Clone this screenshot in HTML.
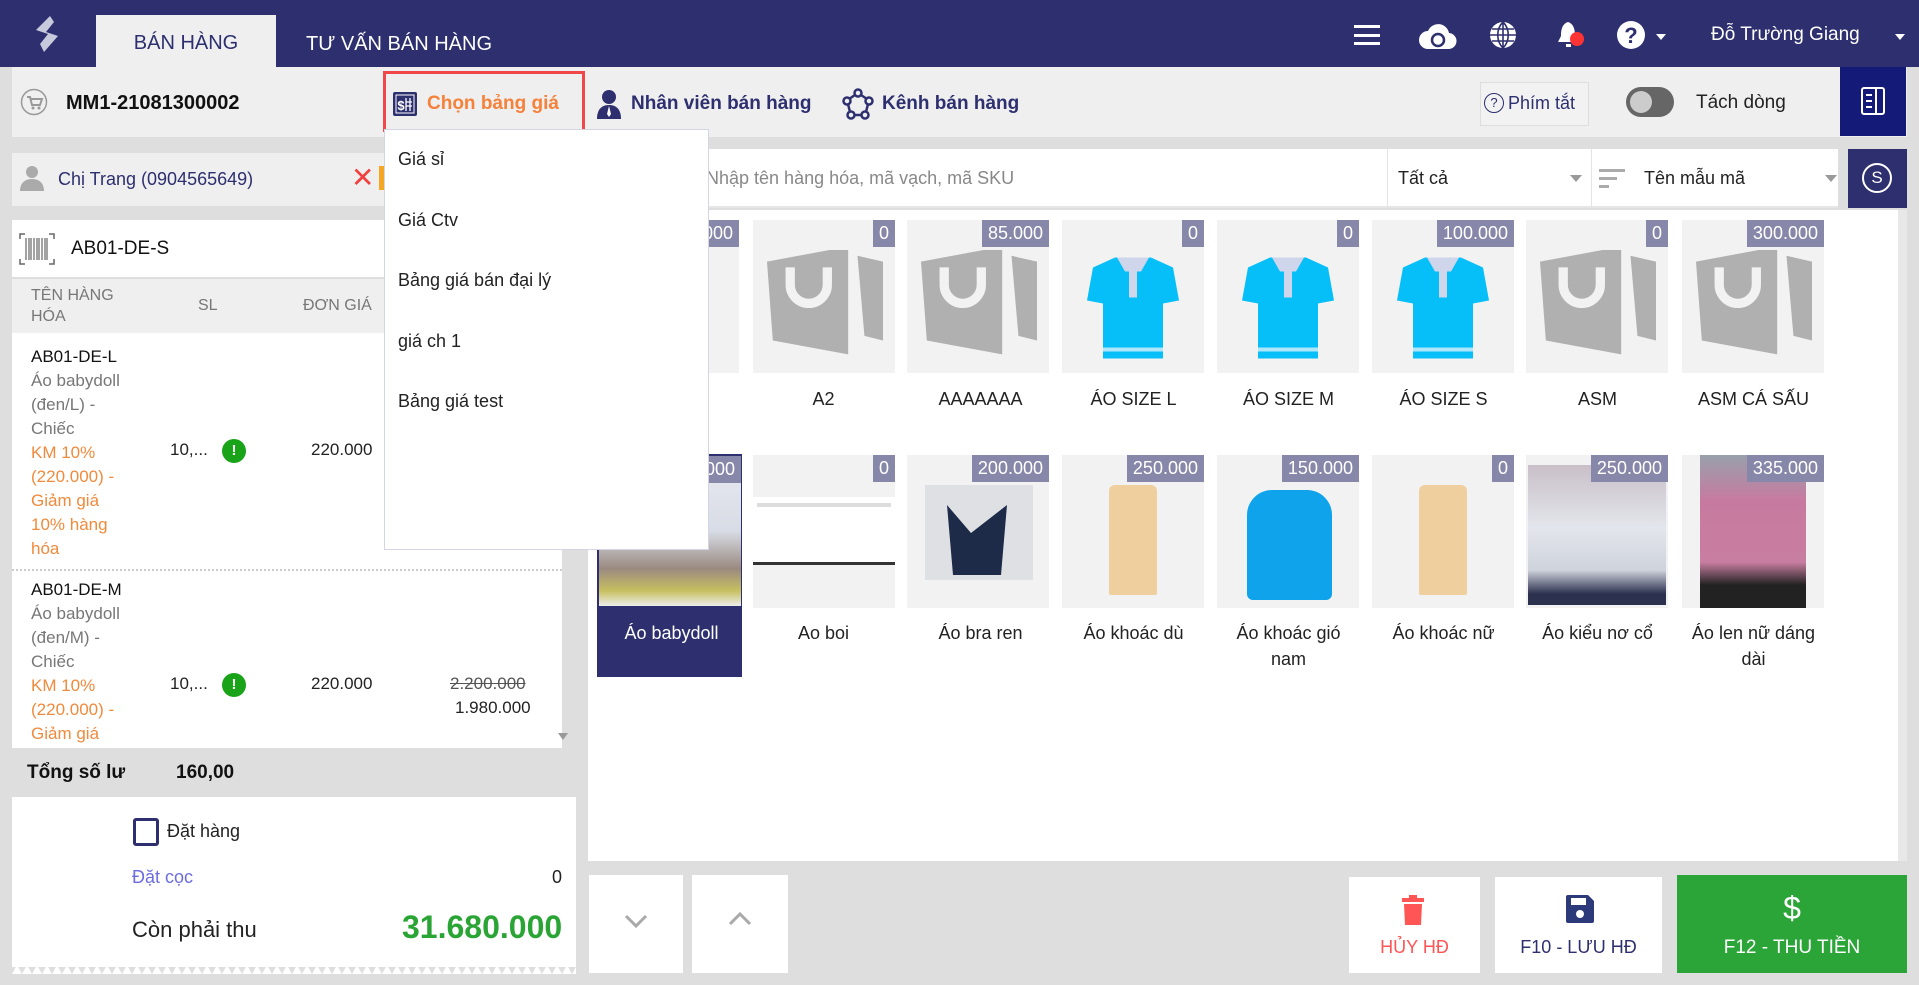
<!DOCTYPE html>
<html><head><meta charset="utf-8">
<style>
*{box-sizing:border-box;margin:0;padding:0}
body{width:1919px;height:985px;overflow:hidden;background:#dedede;font-family:"Liberation Sans","Noto Sans CJK SC",sans-serif;font-size:18px;color:#222;position:relative}
.a{position:absolute}
.top{left:0;top:0;width:1919px;height:67px;background:#2d2f6f}
.card{position:absolute;width:142px;height:153px;background:#f2f2f2}
.badge{position:absolute;right:0;top:0;height:27px;line-height:27px;padding:0 6px;background:#8787aa;color:#fff;font-size:18px}
.nm{position:absolute;width:155px;text-align:center;font-size:18px;color:#222;line-height:26px}
.ln{position:absolute;left:31px;font-size:17px;line-height:24px}
.g{color:#777}.o{color:#f08a3c}
.bag{position:absolute;left:14px;top:30px}
</style></head><body>
<!-- top bar -->
<div class="a top"></div>
<svg class="a" style="left:30px;top:14px" width="34" height="40" viewBox="0 0 34 40"><path d="M20 2 L6 16 L18 20 L10 30 L14 38 L28 22 L16 18 L24 8 Z" fill="#c7c9dc"/></svg>
<div class="a" style="left:96px;top:15px;width:180px;height:52px;background:#efefef;color:#2d2f6f;font-size:20px;text-align:center;line-height:56px">BÁN HÀNG</div>
<div class="a" style="left:306px;top:17px;color:#fff;font-size:20px;line-height:54px">TƯ VẤN BÁN HÀNG</div>
<div class="a" style="left:1354px;top:25px;width:26px;height:20px;border-top:3px solid #fff;border-bottom:3px solid #fff"><div style="margin-top:6px;height:3px;background:#fff"></div></div>
<svg class="a" style="left:1418px;top:21px" width="40" height="30" viewBox="0 0 40 30"><path d="M10 28 a9 9 0 0 1 0-18 a11 11 0 0 1 21 2 a8 8 0 0 1-1 16z" fill="#fff"/><circle cx="20" cy="19" r="6" fill="none" stroke="#2d2f6f" stroke-width="2.5"/></svg>
<svg class="a" style="left:1488px;top:20px" width="30" height="30" viewBox="0 0 30 30"><circle cx="15" cy="15" r="13" fill="#fff"/><path d="M15 2v26M2 15h26M4 9h22M4 21h22M15 2c-7 7-7 19 0 26M15 2c7 7 7 19 0 26" stroke="#2d2f6f" stroke-width="1.6" fill="none"/></svg>
<svg class="a" style="left:1555px;top:18px" width="32" height="34" viewBox="0 0 32 34"><path d="M13 4c-6 2-7 8-7 14l-3 6h20l-3-6c0-6-1-12-7-14z" fill="#fff"/><rect x="11" y="26" width="5" height="3" fill="#fff"/><circle cx="22" cy="21" r="7" fill="#f33"/></svg>
<svg class="a" style="left:1616px;top:20px" width="30" height="30" viewBox="0 0 30 30"><circle cx="15" cy="15" r="14" fill="#fff"/><text x="15" y="23" text-anchor="middle" font-family="Liberation Sans" font-weight="bold" font-size="22" fill="#2d2f6f">?</text></svg>
<div class="a" style="left:1656px;top:34px;border-left:5px solid transparent;border-right:5px solid transparent;border-top:6px solid #fff"></div>
<div class="a" style="left:1711px;top:24px;color:#fff;font-size:19px">Đỗ Trường Giang</div>
<div class="a" style="left:1895px;top:34px;border-left:5px solid transparent;border-right:5px solid transparent;border-top:6px solid #fff"></div>

<!-- toolbar -->
<div class="a" style="left:12px;top:67px;width:1895px;height:70px;background:#efefef"></div>
<svg class="a" style="left:20px;top:88px" width="28" height="28" viewBox="0 0 28 28"><circle cx="14" cy="14" r="12.5" fill="none" stroke="#999" stroke-width="1.5"/><path d="M7 9h3l2 8h8l2-6H11" fill="none" stroke="#999" stroke-width="2"/><circle cx="13" cy="20" r="1.5" fill="#999"/><circle cx="19" cy="20" r="1.5" fill="#999"/></svg>
<div class="a" style="left:66px;top:92px;font-size:20px;font-weight:bold;color:#111">MM1-21081300002</div>
<div class="a" style="left:383px;top:71px;width:202px;height:61px;border:3px solid #f0474a"></div>
<svg class="a" style="left:392px;top:91px" width="26" height="26" viewBox="0 0 26 26"><rect x="1" y="1" width="24" height="24" rx="2" fill="#2d2f6f"/><rect x="4" y="4" width="18" height="18" fill="none" stroke="#fff" stroke-width="1"/><text x="9" y="19" font-size="13" font-family="Liberation Sans" fill="#fff" text-anchor="middle" font-weight="bold">$</text><path d="M14 7v13M18 7v13M14 11h6M14 15h6" stroke="#fff" stroke-width="1.3"/></svg>
<div class="a" style="left:427px;top:93px;color:#f5813a;font-size:19px;font-weight:bold">Chọn bảng giá</div>
<svg class="a" style="left:596px;top:88px" width="26" height="32" viewBox="0 0 26 32"><circle cx="13" cy="9" r="7" fill="#2d2f6f"/><path d="M1 31c0-10 5-14 12-14s12 4 12 14z" fill="#2d2f6f"/><path d="M13 18l-2 8 2 3 2-3z" fill="#fff"/></svg>
<div class="a" style="left:631px;top:93px;color:#2d2f6f;font-size:19px;font-weight:bold">Nhân viên bán hàng</div>
<svg class="a" style="left:842px;top:88px" width="32" height="32" viewBox="0 0 32 32" fill="none" stroke="#2d2f6f" stroke-width="2.5"><circle cx="16" cy="5" r="3.5"/><circle cx="5" cy="13" r="3.5"/><circle cx="27" cy="13" r="3.5"/><circle cx="9" cy="27" r="3.5"/><circle cx="23" cy="27" r="3.5"/><path d="M13 7l-6 4M19 7l6 4M6 16l2 8M26 16l-2 8M12 27h8"/></svg>
<div class="a" style="left:882px;top:93px;color:#2d2f6f;font-size:19px;font-weight:bold">Kênh bán hàng</div>
<div class="a" style="left:1480px;top:82px;width:109px;height:44px;border:1px solid #ddd;background:#f2f2f2"></div>
<div class="a" style="left:1484px;top:93px;width:20px;height:20px;border:1.5px solid #2d2f6f;border-radius:50%;font-size:13px;text-align:center;line-height:18px;color:#2d2f6f">?</div>
<div class="a" style="left:1508px;top:93px;color:#2d2f6f;font-size:18px">Phím tắt</div>
<div class="a" style="left:1626px;top:87px;width:48px;height:30px;border-radius:15px;background:#666"><div style="position:absolute;left:4px;top:4px;width:22px;height:22px;border-radius:50%;background:#ccc"></div></div>
<div class="a" style="left:1696px;top:92px;font-size:19px;color:#222">Tách dòng</div>
<div class="a" style="left:1840px;top:67px;width:66px;height:69px;background:#131a77"></div>
<svg class="a" style="left:1860px;top:86px" width="26" height="30" viewBox="0 0 26 30" fill="none" stroke="#fff" stroke-width="2"><rect x="2" y="2" width="22" height="26" rx="2"/><path d="M16 2v26M6 9h6M6 15h6M6 21h6"/></svg>

<!-- left panel -->
<div class="a" style="left:12px;top:153px;width:564px;height:53px;background:#efefef"></div>
<svg class="a" style="left:19px;top:164px" width="26" height="28" viewBox="0 0 26 28"><circle cx="13" cy="8" r="6" fill="#aaa"/><path d="M1 27c0-8 5-12 12-12s12 4 12 12z" fill="#aaa"/></svg>
<div class="a" style="left:58px;top:169px;color:#2d2f6f;font-size:18px">Chị Trang (0904565649)</div>
<div class="a" style="left:351px;top:163px;color:#f04040;font-size:28px;line-height:30px">✕</div>
<div class="a" style="left:379px;top:166px;width:5px;height:24px;background:#f5a623"></div>
<div class="a" style="left:12px;top:220px;width:564px;height:57px;background:#fff"></div>
<svg class="a" style="left:19px;top:233px" width="36" height="32" viewBox="0 0 36 32" stroke="#666" fill="none"><path d="M1 6V1h5M30 1h5v5M1 26v5h5M30 31h5v-5" stroke-width="1.5"/><path d="M7 5v22M10 5v22M12 5v22M15 5v22M18 5v22M20 5v22M23 5v22M26 5v22M28 5v22" stroke-width="1.2"/></svg>
<div class="a" style="left:71px;top:238px;font-size:19px;color:#111">AB01-DE-S</div>
<div class="a" style="left:12px;top:279px;width:564px;height:54px;background:#efefef"></div>
<div class="a" style="left:31px;top:285px;color:#777;font-size:16px;line-height:21px">TÊN HÀNG<br>HÓA</div>
<div class="a" style="left:198px;top:297px;color:#777;font-size:16px">SL</div>
<div class="a" style="left:303px;top:297px;color:#777;font-size:16px">ĐƠN GIÁ</div>
<div class="a" style="left:12px;top:333px;width:550px;height:415px;background:#fff"></div>
<div class="a" style="left:12px;top:569px;width:550px;border-top:2px dotted #ccc"></div>
<div class="ln" style="top:345px;color:#111">AB01-DE-L</div>
<div class="ln g" style="top:369px">Áo babydoll</div>
<div class="ln g" style="top:393px">(đen/L) -</div>
<div class="ln g" style="top:417px">Chiếc</div>
<div class="ln o" style="top:441px">KM 10%</div>
<div class="ln o" style="top:465px">(220.000) -</div>
<div class="ln o" style="top:489px">Giảm giá</div>
<div class="ln o" style="top:513px">10% hàng</div>
<div class="ln o" style="top:537px">hóa</div>
<div class="a" style="left:170px;top:440px;font-size:17px">10,...</div>
<div class="a" style="left:222px;top:439px;width:24px;height:24px;border-radius:50%;background:#19a319;color:#fff;font-weight:bold;text-align:center;line-height:24px;font-size:15px">!</div>
<div class="a" style="left:311px;top:440px;font-size:17px">220.000</div>
<div class="ln" style="top:578px;color:#111">AB01-DE-M</div>
<div class="ln g" style="top:602px">Áo babydoll</div>
<div class="ln g" style="top:626px">(đen/M) -</div>
<div class="ln g" style="top:650px">Chiếc</div>
<div class="ln o" style="top:674px">KM 10%</div>
<div class="ln o" style="top:698px">(220.000) -</div>
<div class="ln o" style="top:722px">Giảm giá</div>
<div class="a" style="left:170px;top:674px;font-size:17px">10,...</div>
<div class="a" style="left:222px;top:673px;width:24px;height:24px;border-radius:50%;background:#19a319;color:#fff;font-weight:bold;text-align:center;line-height:24px;font-size:15px">!</div>
<div class="a" style="left:311px;top:674px;font-size:17px">220.000</div>
<div class="a" style="left:450px;top:674px;font-size:17px;color:#555;text-decoration:line-through">2.200.000</div>
<div class="a" style="left:455px;top:698px;font-size:17px">1.980.000</div>
<div class="a" style="left:558px;top:733px;border-left:5px solid transparent;border-right:5px solid transparent;border-top:7px solid #999"></div>
<div class="a" style="left:27px;top:762px;font-size:19px;font-weight:bold;color:#111">Tổng số lư</div>
<div class="a" style="left:176px;top:762px;font-size:19px;font-weight:bold;color:#111">160,00</div>
<div class="a" style="left:12px;top:797px;width:564px;height:170px;background:#fff"></div>
<svg class="a" style="left:12px;top:962px" width="564" height="12"><defs><pattern id="z" width="10" height="12" patternUnits="userSpaceOnUse"><path d="M0 12L5 3L10 12z" fill="#fff"/></pattern></defs><rect width="564" height="12" fill="url(#z)"/></svg>
<div class="a" style="left:133px;top:818px;width:26px;height:28px;border:3px solid #2d2f6f;border-radius:3px"></div>
<div class="a" style="left:167px;top:821px;font-size:18px">Đặt hàng</div>
<div class="a" style="left:132px;top:867px;font-size:18px;color:#6c6ce0">Đặt cọc</div>
<div class="a" style="left:552px;top:867px;font-size:18px">0</div>
<div class="a" style="left:132px;top:917px;font-size:22px">Còn phải thu</div>
<div class="a" style="left:402px;top:909px;font-size:32px;font-weight:bold;color:#2aa535">31.680.000</div>

<!-- right panel -->
<div class="a" style="left:588px;top:149px;width:1250px;height:59px;background:#fff;border-bottom:2px solid #e6e6e6"></div>
<div class="a" style="left:706px;top:168px;font-size:18px;color:#888">Nhập tên hàng hóa, mã vạch, mã SKU</div>
<div class="a" style="left:1387px;top:149px;height:58px;border-left:1px solid #e4e4e4"></div>
<div class="a" style="left:1398px;top:168px;font-size:18px">Tất cả</div>
<div class="a" style="left:1570px;top:175px;border-left:6px solid transparent;border-right:6px solid transparent;border-top:7px solid #999"></div>
<div class="a" style="left:1591px;top:149px;height:58px;border-left:1px solid #e4e4e4"></div>
<div class="a" style="left:1599px;top:169px;width:26px;height:3px;background:#aaa"></div>
<div class="a" style="left:1599px;top:177px;width:18px;height:3px;background:#aaa"></div>
<div class="a" style="left:1599px;top:185px;width:10px;height:3px;background:#aaa"></div>
<div class="a" style="left:1644px;top:168px;font-size:18px">Tên mẫu mã</div>
<div class="a" style="left:1825px;top:175px;border-left:6px solid transparent;border-right:6px solid transparent;border-top:7px solid #999"></div>
<div class="a" style="left:1848px;top:149px;width:59px;height:59px;background:#2d2f6f"></div>
<div class="a" style="left:1862px;top:163px;width:30px;height:30px;border:2px solid #fff;border-radius:50%;color:#fff;text-align:center;line-height:26px;font-size:17px">S</div>
<div class="a" style="left:588px;top:210px;width:1310px;height:651px;background:#fff"></div>
<div class="a" style="left:1898px;top:210px;width:9px;height:651px;background:#e8e8e8"></div>

<!-- row 1 -->
<div class="card" style="left:597px;top:220px"><div class="badge">350.000</div></div>
<div class="card" style="left:753px;top:220px"><svg class="bag" width="116" height="116" viewBox="0 0 100 100"><path d="M0 10L70 -3V90L5 78z" fill="#b0b0b0"/><path d="M78 5L100 10V78L84 74z" fill="#b0b0b0"/><path d="M20 15v15a16 16 0 0 0 32 0V15" stroke="#f2f2f2" stroke-width="8" fill="none"/></svg><div class="badge">0</div></div>
<div class="card" style="left:907px;top:220px"><svg class="bag" width="116" height="116" viewBox="0 0 100 100"><path d="M0 10L70 -3V90L5 78z" fill="#b0b0b0"/><path d="M78 5L100 10V78L84 74z" fill="#b0b0b0"/><path d="M20 15v15a16 16 0 0 0 32 0V15" stroke="#f2f2f2" stroke-width="8" fill="none"/></svg><div class="badge">85.000</div></div>
<div class="card" style="left:1062px;top:220px"><svg class="a" style="left:25px;top:33px" width="92" height="110" viewBox="0 0 92 105"><path d="M28 2L6 12L0 45l16 3v55h60V48l16-3-6-33L64 2z" fill="#06bff8"/><path d="M30 2h32l-8 14h-16z" fill="#cfd5ea"/><rect x="42" y="14" width="8" height="28" fill="#cfd5ea"/><rect x="16" y="92" width="60" height="4" fill="#aee6fb"/></svg><div class="badge">0</div></div>
<div class="card" style="left:1217px;top:220px"><svg class="a" style="left:25px;top:33px" width="92" height="110" viewBox="0 0 92 105"><path d="M28 2L6 12L0 45l16 3v55h60V48l16-3-6-33L64 2z" fill="#06bff8"/><path d="M30 2h32l-8 14h-16z" fill="#cfd5ea"/><rect x="42" y="14" width="8" height="28" fill="#cfd5ea"/><rect x="16" y="92" width="60" height="4" fill="#aee6fb"/></svg><div class="badge">0</div></div>
<div class="card" style="left:1372px;top:220px"><svg class="a" style="left:25px;top:33px" width="92" height="110" viewBox="0 0 92 105"><path d="M28 2L6 12L0 45l16 3v55h60V48l16-3-6-33L64 2z" fill="#06bff8"/><path d="M30 2h32l-8 14h-16z" fill="#cfd5ea"/><rect x="42" y="14" width="8" height="28" fill="#cfd5ea"/><rect x="16" y="92" width="60" height="4" fill="#aee6fb"/></svg><div class="badge">100.000</div></div>
<div class="card" style="left:1526px;top:220px"><svg class="bag" width="116" height="116" viewBox="0 0 100 100"><path d="M0 10L70 -3V90L5 78z" fill="#b0b0b0"/><path d="M78 5L100 10V78L84 74z" fill="#b0b0b0"/><path d="M20 15v15a16 16 0 0 0 32 0V15" stroke="#f2f2f2" stroke-width="8" fill="none"/></svg><div class="badge">0</div></div>
<div class="card" style="left:1682px;top:220px"><svg class="bag" width="116" height="116" viewBox="0 0 100 100"><path d="M0 10L70 -3V90L5 78z" fill="#b0b0b0"/><path d="M78 5L100 10V78L84 74z" fill="#b0b0b0"/><path d="M20 15v15a16 16 0 0 0 32 0V15" stroke="#f2f2f2" stroke-width="8" fill="none"/></svg><div class="badge">300.000</div></div>
<div class="nm" style="left:746px;top:386px">A2</div>
<div class="nm" style="left:903px;top:386px">AAAAAAA</div>
<div class="nm" style="left:1056px;top:386px">ÁO SIZE L</div>
<div class="nm" style="left:1211px;top:386px">ÁO SIZE M</div>
<div class="nm" style="left:1366px;top:386px">ÁO SIZE S</div>
<div class="nm" style="left:1520px;top:386px">ASM</div>
<div class="nm" style="left:1676px;top:386px">ASM CÁ SẤU</div>

<!-- row 2 -->
<div class="a" style="left:597px;top:454px;width:145px;height:223px;background:#2d2f6f"></div>
<div class="card" style="left:599px;top:456px;height:150px;background:linear-gradient(#e8eaf0 0,#d8dce6 50%,#9a8a80 75%,#c8c060 90%,#eee 100%)"><div class="badge">480.000</div></div>
<div class="nm" style="left:594px;top:620px;color:#fff">Áo babydoll</div>
<div class="card" style="left:753px;top:455px"><div class="a" style="left:0;top:42px;width:142px;height:68px;background:#fff;border-bottom:3px solid #333"></div><div class="a" style="left:4px;top:48px;width:134px;height:4px;background:#ddd"></div><div class="badge">0</div></div>
<div class="card" style="left:907px;top:455px"><div class="a" style="left:18px;top:30px;width:108px;height:95px;background:#dfe0e4"></div><div class="a" style="left:40px;top:50px;width:60px;height:70px;background:#1d2a48;clip-path:polygon(0 0,40% 40%,100% 0,90% 100%,10% 100%)"></div><div class="badge">200.000</div></div>
<div class="card" style="left:1062px;top:455px"><div class="a" style="left:47px;top:30px;width:48px;height:110px;background:#efcf9d;border-radius:6px 6px 2px 2px"></div><div class="badge">250.000</div></div>
<div class="card" style="left:1217px;top:455px"><div class="a" style="left:30px;top:35px;width:85px;height:110px;background:#0ea3ea;border-radius:25px 25px 6px 6px"></div><div class="badge">150.000</div></div>
<div class="card" style="left:1372px;top:455px"><div class="a" style="left:47px;top:30px;width:48px;height:110px;background:#efcf9d;border-radius:6px 6px 2px 2px"></div><div class="badge">0</div></div>
<div class="card" style="left:1526px;top:455px"><div class="a" style="left:2px;top:10px;width:138px;height:140px;background:linear-gradient(#c9bfc8,#e3e6ec 45%,#cfd3dc 75%,#2c3150 92%)"></div><div class="badge">250.000</div></div>
<div class="card" style="left:1682px;top:455px"><div class="a" style="left:18px;top:0;width:106px;height:153px;background:linear-gradient(#98a0ac,#c77a9f 30%,#c87ea0 70%,#222 85%)"></div><div class="badge">335.000</div></div>
<div class="nm" style="left:746px;top:620px">Ao boi</div>
<div class="nm" style="left:903px;top:620px">Áo bra ren</div>
<div class="nm" style="left:1056px;top:620px">Áo khoác dù</div>
<div class="nm" style="left:1211px;top:620px">Áo khoác gió<br>nam</div>
<div class="nm" style="left:1366px;top:620px">Áo khoác nữ</div>
<div class="nm" style="left:1520px;top:620px">Áo kiểu nơ cổ</div>
<div class="nm" style="left:1676px;top:620px">Áo len nữ dáng<br>dài</div>

<!-- dropdown -->
<div class="a" style="left:384px;top:129px;width:325px;height:421px;background:#fff;border:1px solid #d4d4e4"></div>
<div class="a" style="left:398px;top:149px;font-size:18px">Giá sỉ</div>
<div class="a" style="left:398px;top:210px;font-size:18px">Giá Ctv</div>
<div class="a" style="left:398px;top:270px;font-size:18px">Bảng giá bán đại lý</div>
<div class="a" style="left:398px;top:331px;font-size:18px">giá ch 1</div>
<div class="a" style="left:398px;top:391px;font-size:18px">Bảng giá test</div>

<!-- bottom buttons -->
<div class="a" style="left:589px;top:875px;width:94px;height:98px;background:#fff"></div>
<div class="a" style="left:692px;top:875px;width:96px;height:98px;background:#fff"></div>
<svg class="a" style="left:624px;top:914px" width="24" height="14"><path d="M2 2l10 10 10-10" stroke="#aaa" stroke-width="3" fill="none"/></svg>
<svg class="a" style="left:728px;top:912px" width="24" height="14"><path d="M2 12l10-10 10 10" stroke="#aaa" stroke-width="3" fill="none"/></svg>
<div class="a" style="left:1349px;top:877px;width:131px;height:96px;background:#fff"></div>
<svg class="a" style="left:1402px;top:895px" width="22" height="30" viewBox="0 0 22 30"><rect x="0" y="3" width="22" height="4" fill="#f55"/><rect x="7" y="0" width="8" height="4" fill="#f55"/><path d="M2 9h18l-1 21H3z" fill="#f55"/></svg>
<div class="a" style="left:1349px;top:937px;width:131px;text-align:center;color:#f55;font-size:18px">HỦY HĐ</div>
<div class="a" style="left:1495px;top:877px;width:167px;height:96px;background:#fff"></div>
<svg class="a" style="left:1566px;top:895px" width="28" height="28" viewBox="0 0 28 28"><path d="M0 2a2 2 0 0 1 2-2h20l6 6v20a2 2 0 0 1-2 2H2a2 2 0 0 1-2-2z" fill="#2d3a7a"/><rect x="5" y="3" width="15" height="7" fill="#fff"/><circle cx="14" cy="19" r="4" fill="#fff"/></svg>
<div class="a" style="left:1495px;top:937px;width:167px;text-align:center;color:#2d2f6f;font-size:18px">F10 - LƯU HĐ</div>
<div class="a" style="left:1677px;top:875px;width:230px;height:98px;background:#2ca538"></div>
<div class="a" style="left:1677px;top:890px;width:230px;text-align:center;color:#fff;font-size:32px">$</div>
<div class="a" style="left:1677px;top:937px;width:230px;text-align:center;color:#fff;font-size:19px">F12 - THU TIỀN</div>
</body></html>
